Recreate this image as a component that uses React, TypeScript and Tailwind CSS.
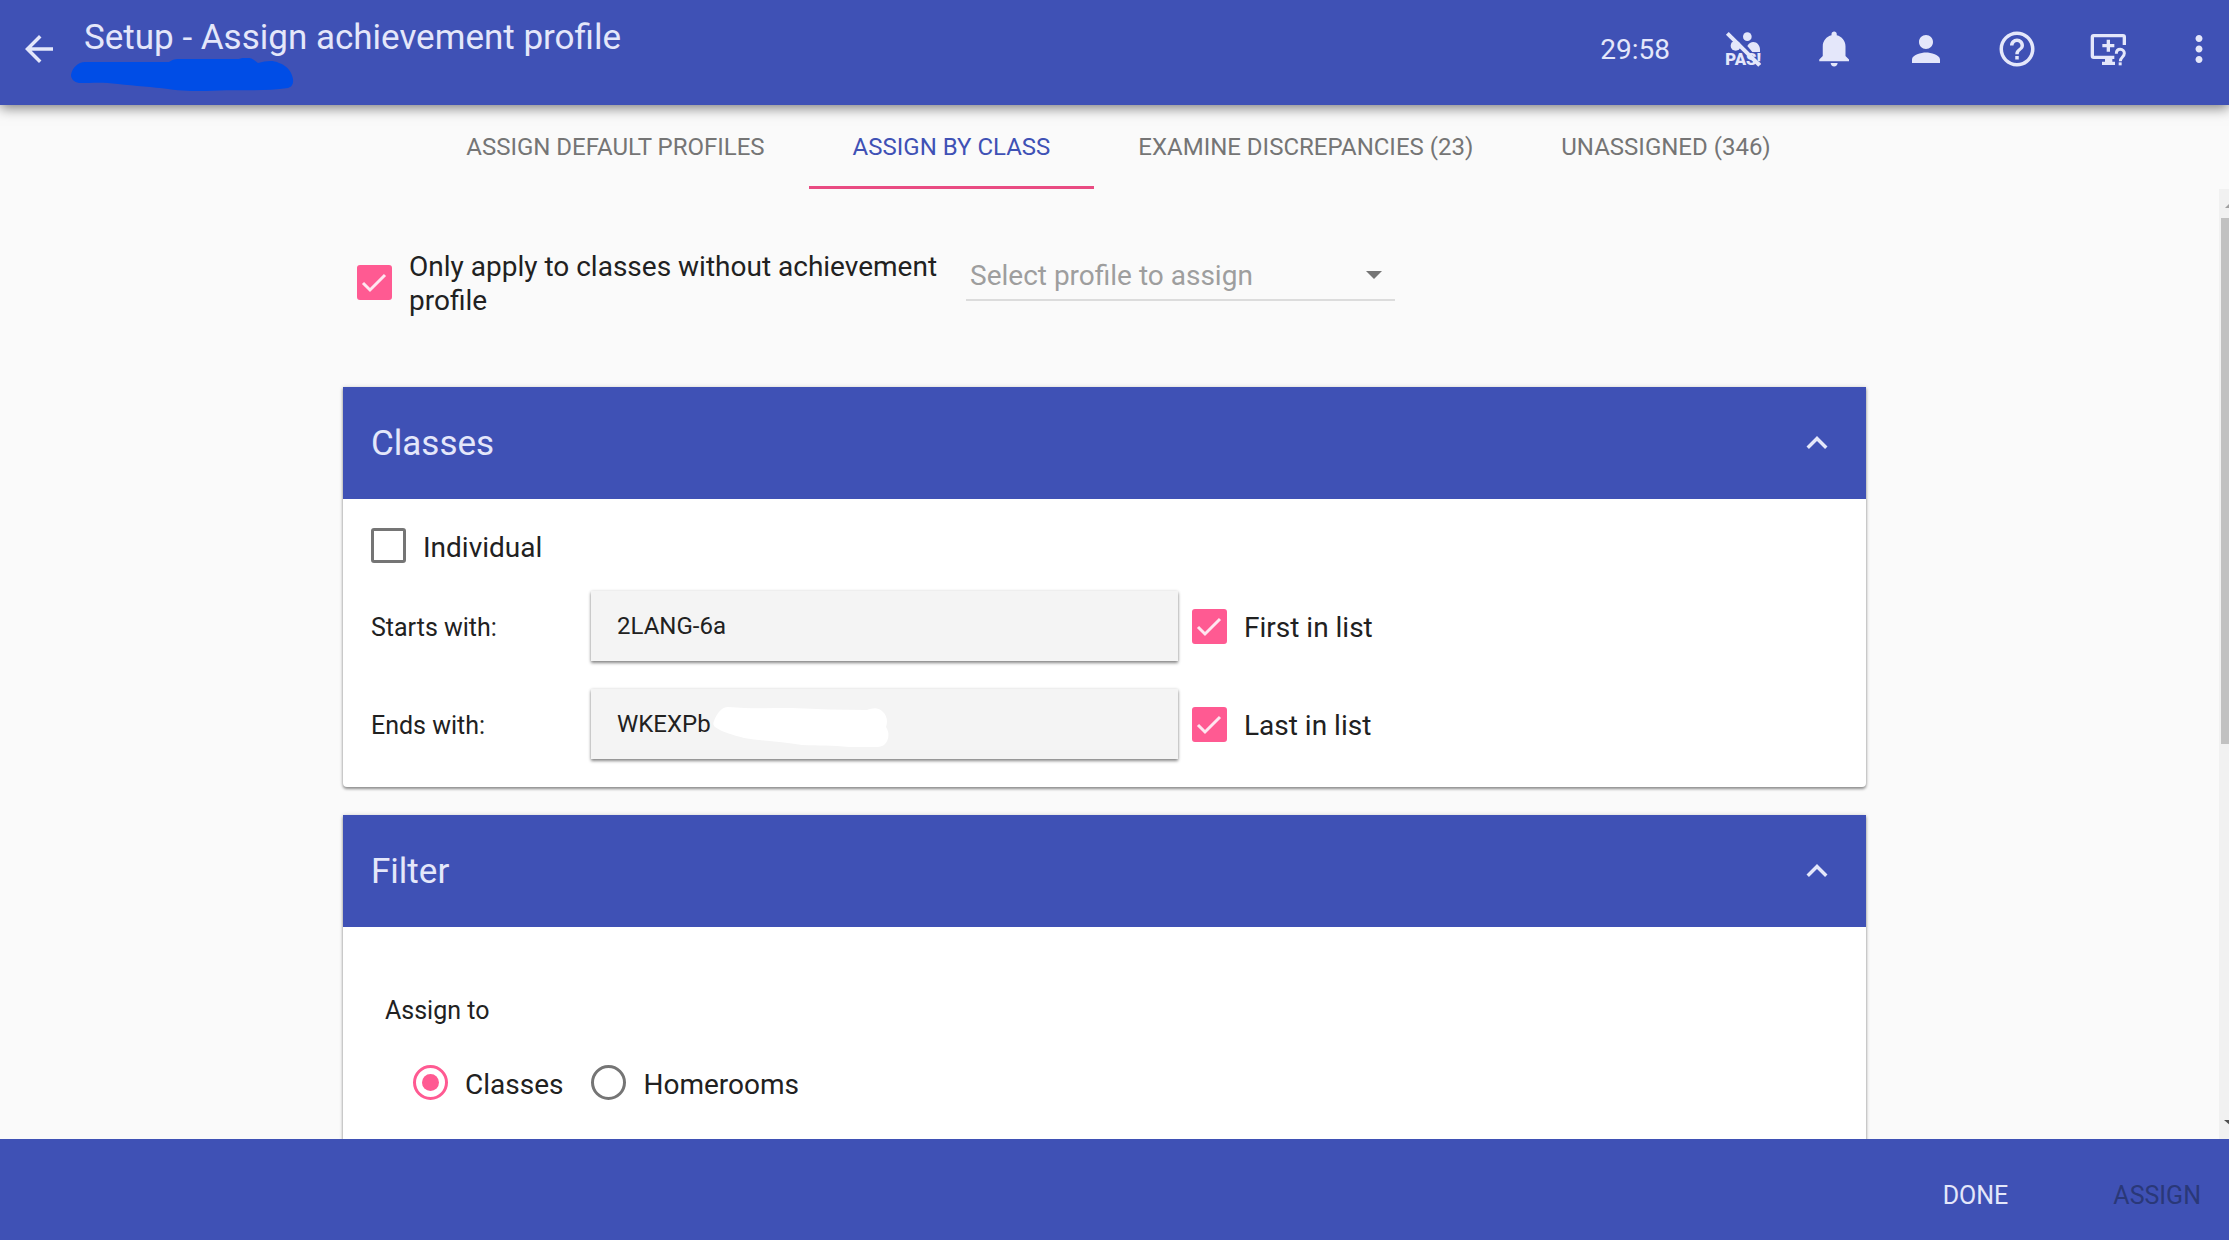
import { useState, type ReactNode } from "react";
import { MdArrowBack, MdHelpOutline, MdKeyboardArrowUp, MdMoreVert, MdPerson } from "react-icons/md";

function PassOffIcon() {
  return (
    <svg viewBox="0 0 126 126" className="size-[42px]" fill="currentColor" aria-hidden="true">
      <circle cx="73" cy="26" r="13" />
      <circle cx="38" cy="53" r="15" />
      <path d="M73 54c4-8 11-12 18-12 11 0 20 10 20 24v6H88z" />
      <text x="7" y="110" fontFamily="Roboto, sans-serif" fontWeight="900" fontSize="50">
        PAS!
      </text>
      <path d="M21 11l60 60" stroke="#3f51b5" strokeWidth="6" />
      <path d="M13 16l97 96" stroke="currentColor" strokeWidth="12" />
    </svg>
  );
}

function BellIcon() {
  return (
    <svg viewBox="0 0 24 24" className="size-[42px]" fill="currentColor" aria-hidden="true">
      <path d="M11.5 22c1.1 0 2-.9 2-2h-4c0 1.1.9 2 2 2zm6.5-6v-5.5c0-3.07-2.13-5.64-5-6.32V3.5c0-.83-.67-1.5-1.5-1.5S10 2.67 10 3.5v.68c-2.87.68-5 3.25-5 6.32V16l-2 2v1h17v-1l-2-2z" />
    </svg>
  );
}

function SupportScreenIcon() {
  return (
    <svg viewBox="0 0 126 126" className="size-[42px]" fill="none" stroke="currentColor" strokeWidth="10" aria-hidden="true">
      <path d="M112 51V27q0-4-4-4H20q-4 0-4 4v57q0 4 4 4h62" />
      <path d="M46 53h36M64 35v36" />
      <path d="M54 92h22v9h8v10H45v-10h9z" fill="currentColor" stroke="none" />
      <path d="M88 77c0-8 5-13 12-13s12 5 12 12c0 11-12 11-12 24" strokeWidth="9" />
      <path d="M95 103h9v9h-9z" fill="currentColor" stroke="none" />
    </svg>
  );
}

function IconButton({ label, children }: { label: string; children: ReactNode }) {
  return (
    <button type="button" aria-label={label} className="shrink-0">
      {children}
    </button>
  );
}

function Checkbox({ id, label, defaultChecked = false }: { id: string; label: string; defaultChecked?: boolean }) {
  return (
    <label htmlFor={id} className="flex items-center gap-[17px] text-[28px] leading-[34px]">
      <span className="relative size-[35px] shrink-0">
        <input
          id={id}
          type="checkbox"
          defaultChecked={defaultChecked}
          className="peer block size-[35px] appearance-none rounded-[3px] border-[3px] border-[#757575] checked:border-[#ff5a92] checked:bg-[#ff5a92]"
        />
        <svg
          viewBox="0 0 35 35"
          className="pointer-events-none absolute inset-0 hidden peer-checked:block"
          fill="none"
          stroke="#ffe6f0"
          strokeWidth="3"
          aria-hidden="true"
        >
          <path d="M6 18l7 7L28 10" />
        </svg>
      </span>
      <span className="pt-1">{label}</span>
    </label>
  );
}

function Radio({ id, label, defaultChecked = false }: { id: string; label: string; defaultChecked?: boolean }) {
  return (
    <label htmlFor={id} className="flex items-center gap-[17px] text-[28px] leading-[34px]">
      <span className="relative size-[35px] shrink-0">
        <input
          id={id}
          name="assign-to"
          type="radio"
          defaultChecked={defaultChecked}
          className="peer block size-[35px] appearance-none rounded-full border-[3px] border-[#757575] checked:border-[#ff5a92]"
        />
        <span className="pointer-events-none absolute inset-[9px] hidden rounded-full bg-[#ff5a92] peer-checked:block" />
      </span>
      <span className="pt-1.5">{label}</span>
    </label>
  );
}

function Panel({ title, children }: { title: string; children: ReactNode }) {
  const [open, setOpen] = useState(true);
  return (
    <section className="rounded-b-[4px] bg-white shadow-[0_2px_3px_rgba(0,0,0,0.4),0_0_4px_rgba(0,0,0,0.15)]">
      <h2>
        <button
          type="button"
          aria-expanded={open}
          onClick={() => setOpen(!open)}
          className="flex h-28 w-full items-center justify-between bg-[#3f51b5] px-7 text-[35px] text-[#e4e7fa]"
        >
          <span className="pt-0.5">{title}</span>
          <MdKeyboardArrowUp className="size-[42px]" />
        </button>
      </h2>
      {open && children}
    </section>
  );
}

const fieldClass =
  "h-[70px] w-full bg-[#f4f4f4] px-[26px] text-[24px] shadow-[0_2px_3px_rgba(0,0,0,0.45),0_0_3px_rgba(0,0,0,0.12)] outline-none";

const tabs = ["ASSIGN DEFAULT PROFILES", "ASSIGN BY CLASS", "EXAMINE DISCREPANCIES (23)", "UNASSIGNED (346)"];

export default function App() {
  const [active, setActive] = useState(1);
  return (
    <div className="flex h-screen flex-col overflow-hidden bg-[#fafafa] font-['Roboto',sans-serif] text-[#212121]">
      <header className="z-10 flex h-[105px] shrink-0 items-center bg-[#3f51b5] pr-[9px] pl-[18px] text-[#e4e7fa] shadow-[0_3px_12px_rgba(0,0,0,0.5)]">
        <div className="flex flex-1 items-center gap-6 pb-[7px]">
          <IconButton label="Back">
            <MdArrowBack className="size-[42px]" />
          </IconButton>
          <div className="relative pb-[22px]">
            <h1 className="text-[35px] leading-[42px]">Setup - Assign achievement profile</h1>
            <svg viewBox="0 0 224 33" className="absolute -left-[13px] top-[41px] h-[33px] w-[224px]" aria-hidden="true">
              <path
                fill="#004de6"
                d="M0 17C1 10 7 4 14 4h84c3-2 5-3 9-3h61c5-2 11-2 15 1l4 3c8-2 15-3 21 0 6 2 10 6 12 10 4 8 2 14-3 15-26 4-55 1-82 3-14 0-24 0-38-2-15-2-33-3-50-5-15-2-25-1-39-1-5-1-8-4-8-8z"
              />
            </svg>
          </div>
        </div>
        <div className="flex items-center gap-[49px] pb-[7px]">
          <time className="pt-0.5 pr-1 text-[28px] leading-10">29:58</time>
          <IconButton label="Pass off">
            <PassOffIcon />
          </IconButton>
          <IconButton label="Notifications">
            <BellIcon />
          </IconButton>
          <IconButton label="Account">
            <MdPerson className="size-[42px]" />
          </IconButton>
          <IconButton label="Help">
            <MdHelpOutline className="size-[42px]" />
          </IconButton>
          <IconButton label="Screen support">
            <SupportScreenIcon />
          </IconButton>
          <IconButton label="More">
            <MdMoreVert className="size-[42px]" />
          </IconButton>
        </div>
      </header>

      <nav role="tablist" className="flex shrink-0 justify-center pl-2">
        {tabs.map((tab, i) => (
          <button
            key={tab}
            type="button"
            role="tab"
            aria-selected={i === active}
            onClick={() => setActive(i)}
            className={
              i === active
                ? "border-b-[3px] border-[#e94b82] px-11 pt-[22px] pb-[19px] text-[24px] leading-10 text-[#3f51b5]"
                : "border-b-[3px] border-transparent px-11 pt-[22px] pb-[19px] text-[24px] leading-10 text-[#757575]"
            }
          >
            {tab}
          </button>
        ))}
      </nav>

      <div className="flex min-h-0 flex-1">
        <main className="min-w-0 flex-1 overflow-hidden pr-[10px]">
          <div className="mx-auto flex max-w-[1523px] flex-col gap-7">
            <div className="flex items-start pt-[57px] pb-[41px] pl-[14px]">
              <div className="w-[609px] pr-7">
                <Checkbox id="only-without" label="Only apply to classes without achievement profile" defaultChecked />
              </div>
              <div className="relative w-[429px] pt-[3px]">
                <select
                  aria-label="Select profile to assign"
                  defaultValue=""
                  className="h-[52px] w-full appearance-none border-b-2 border-[#dcdcdc] bg-transparent px-1 pt-1 text-[28px] text-[#9e9e9e] outline-none"
                >
                  <option value="">Select profile to assign</option>
                </select>
                <svg viewBox="0 0 16 8" className="pointer-events-none absolute top-[25px] right-[13px] h-2 w-4" aria-hidden="true">
                  <path d="M0 0h16L8 8z" fill="#757575" />
                </svg>
              </div>
            </div>

            <Panel title="Classes">
              <div className="flex flex-col gap-7 px-7 pt-[29px] pb-7">
                <div className="flex h-[35px] items-center">
                  <Checkbox id="individual" label="Individual" />
                </div>
                <div className="flex items-center">
                  <label htmlFor="starts" className="w-[220px] pt-1 text-[25px]">
                    Starts with:
                  </label>
                  <div className="w-[587px]">
                    <input id="starts" defaultValue="2LANG-6a" className={fieldClass} />
                  </div>
                  <div className="pl-[14px]">
                    <Checkbox id="first" label="First in list" defaultChecked />
                  </div>
                </div>
                <div className="flex items-center">
                  <label htmlFor="ends" className="w-[220px] pt-1 text-[25px]">
                    Ends with:
                  </label>
                  <div className="relative w-[587px]">
                    <input id="ends" defaultValue="WKEXPb" className={fieldClass} />
                    <svg viewBox="0 0 178 40" className="pointer-events-none absolute top-[18px] left-[120px] h-10 w-[178px]" aria-hidden="true">
                      <path
                        fill="#fff"
                        d="M3 14C6 6 11 0 17 0c22 2 44 1 64 1 25 1 50 2 75 2 5-2 11-3 15 1 5 4 6 10 4 16 4 6 3 14-2 18-7 4-21 2-35 2-15-2-32-1-47-2-20-3-39-4-58-7C22 28 11 25 4 20c-2-2-2-4-1-6z"
                      />
                    </svg>
                  </div>
                  <div className="pl-[14px]">
                    <Checkbox id="last" label="Last in list" defaultChecked />
                  </div>
                </div>
              </div>
            </Panel>

            <Panel title="Filter">
              <fieldset className="px-[42px] pt-[68px] pb-16">
                <legend className="contents text-[25px] leading-8">Assign to</legend>
                <div className="flex gap-7 pt-[35px] pl-7">
                  <Radio id="to-classes" label="Classes" defaultChecked />
                  <Radio id="to-homerooms" label="Homerooms" />
                </div>
              </fieldset>
            </Panel>
          </div>
        </main>
        <div className="flex w-[10px] flex-col justify-between overflow-hidden bg-[#f1f1f1] pl-[2px]" aria-hidden="true">
          <svg viewBox="0 0 8 29" className="h-[29px] w-2">
            <path d="M4 19l5-5v5z" fill="#a0a0a0" />
          </svg>
          <div className="grow-[526] bg-[#c1c1c1]" />
          <div className="grow-[366]" />
          <svg viewBox="0 0 8 29" className="h-[29px] w-2">
            <path d="M3 10h7v6z" fill="#505050" />
          </svg>
        </div>
      </div>

      <footer className="flex h-[101px] shrink-0 items-start justify-end gap-[105px] bg-[#3f51b5] pt-[37px] pr-7 text-[25px] leading-10">
        <button type="button" className="text-[#e4e7fa]">
          DONE
        </button>
        <button type="button" disabled className="text-[#2a3878]">
          ASSIGN
        </button>
      </footer>
    </div>
  );
}
